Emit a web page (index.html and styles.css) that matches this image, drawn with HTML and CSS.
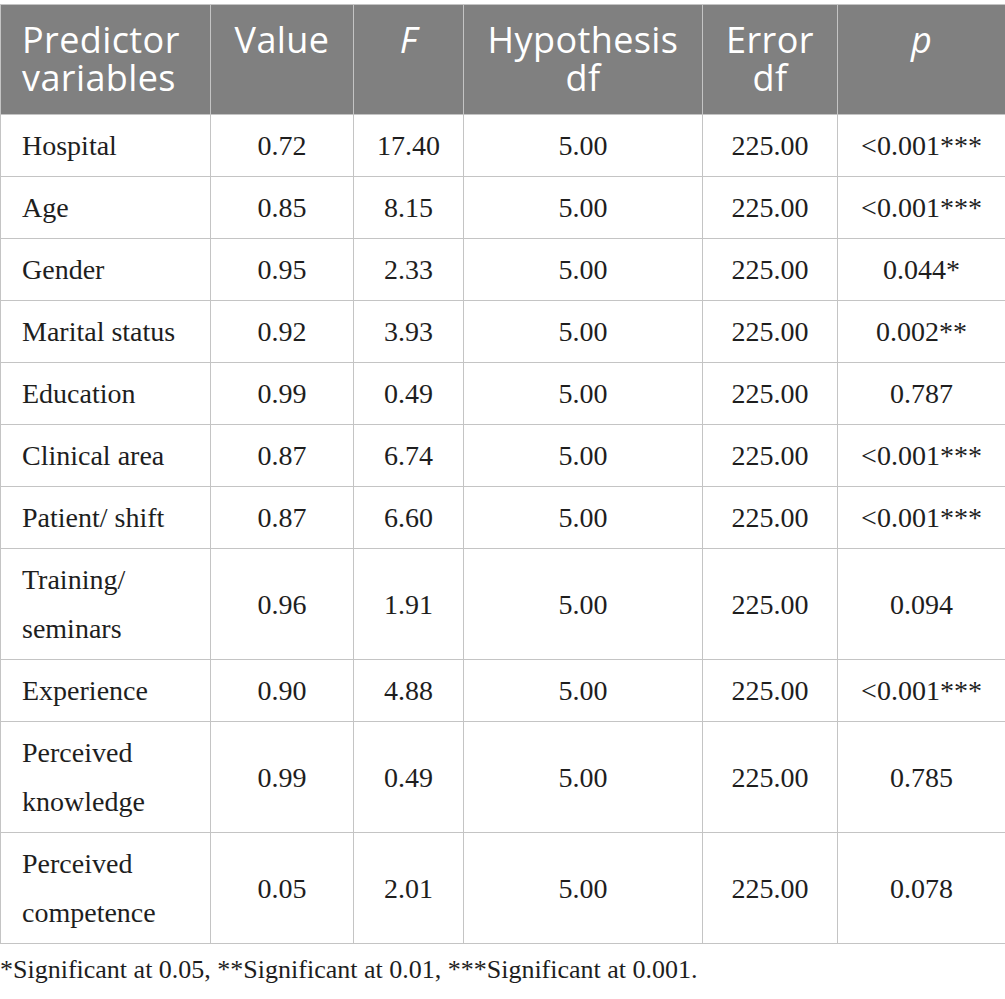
FILE: index.html
```html
<!DOCTYPE html>
<html lang="en">
<head>
    <meta charset="UTF-8">
    <meta name="viewport" content="width=device-width, initial-scale=1.0">
    <title>Predictor variables</title>
    <link rel="stylesheet" href="styles.css">
</head>
<body>
    <div class="table-wrap">
        <table class="stats-table">
            <colgroup>
                <col class="col-name">
                <col class="col-value">
                <col class="col-f">
                <col class="col-hyp">
                <col class="col-err">
                <col class="col-p">
            </colgroup>
            <thead>
                <tr>
                    <th class="left">Predictor variables</th>
                    <th>Value</th>
                    <th><i>F</i></th>
                    <th>Hypothesis df</th>
                    <th>Error df</th>
                    <th><i>p</i></th>
                </tr>
            </thead>
            <tbody>
                <tr><td class="left">Hospital</td><td>0.72</td><td>17.40</td><td>5.00</td><td>225.00</td><td>&lt;0.001***</td></tr>
                <tr><td class="left">Age</td><td>0.85</td><td>8.15</td><td>5.00</td><td>225.00</td><td>&lt;0.001***</td></tr>
                <tr><td class="left">Gender</td><td>0.95</td><td>2.33</td><td>5.00</td><td>225.00</td><td>0.044*</td></tr>
                <tr><td class="left">Marital status</td><td>0.92</td><td>3.93</td><td>5.00</td><td>225.00</td><td>0.002**</td></tr>
                <tr><td class="left">Education</td><td>0.99</td><td>0.49</td><td>5.00</td><td>225.00</td><td>0.787</td></tr>
                <tr><td class="left">Clinical area</td><td>0.87</td><td>6.74</td><td>5.00</td><td>225.00</td><td>&lt;0.001***</td></tr>
                <tr><td class="left">Patient/ shift</td><td>0.87</td><td>6.60</td><td>5.00</td><td>225.00</td><td>&lt;0.001***</td></tr>
                <tr><td class="left">Training/<br>seminars</td><td>0.96</td><td>1.91</td><td>5.00</td><td>225.00</td><td>0.094</td></tr>
                <tr><td class="left">Experience</td><td>0.90</td><td>4.88</td><td>5.00</td><td>225.00</td><td>&lt;0.001***</td></tr>
                <tr><td class="left">Perceived<br>knowledge</td><td>0.99</td><td>0.49</td><td>5.00</td><td>225.00</td><td>0.785</td></tr>
                <tr><td class="left">Perceived<br>competence</td><td>0.05</td><td>2.01</td><td>5.00</td><td>225.00</td><td>0.078</td></tr>
            </tbody>
        </table>
        <p class="footnote">*Significant at 0.05, **Significant at 0.01, ***Significant at 0.001.</p>
    </div>
</body>
</html>
```

FILE: styles.css
```css
body {
    margin: 0;
    background-color: #fff;
    font-family: 'Liberation Serif', serif;
    color: #1e1e1e;
}

.table-wrap {
    padding-top: 4px;
}

.stats-table {
    width: 1005px;
    border-collapse: collapse;
    table-layout: fixed;
}

.col-name { width: 210px; }
.col-value { width: 143px; }
.col-f { width: 110px; }
.col-hyp { width: 239px; }
.col-err { width: 135px; }
.col-p { width: 168px; }

.stats-table th {
    background-color: #808080;
    color: #fff;
    font-family: 'Open Sans', sans-serif;
    font-weight: 400;
    font-size: 36px;
    line-height: 38px;
    letter-spacing: 0.4px;
    padding: 16px 18px 17px 18px;
    text-align: center;
    vertical-align: top;
    border: 1px solid #c4c4c4;
}

.stats-table th i {
    font-style: italic;
}

.stats-table td {
    font-size: 28px;
    line-height: 49px;
    padding: 6px 21px;
    text-align: center;
    vertical-align: middle;
    border: 1px solid #c4c4c4;
}

.stats-table .left {
    text-align: left;
}

.stats-table th.left {
    padding-left: 21px;
}

.footnote {
    margin: 11px 0 0 0;
    font-size: 26px;
    line-height: 30px;
}
```
